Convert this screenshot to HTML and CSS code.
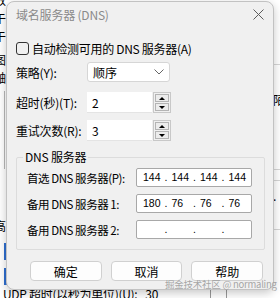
FILE: index.html
```html
<!DOCTYPE html>
<html lang="zh-CN">

<head>
    <meta charset="UTF-8">
    <meta name="viewport" content="width=device-width, initial-scale=1.0">
    <title>域名服务器 (DNS)</title>
    <link rel="stylesheet" href="styles.css">
</head>

<body>
    <div class="desk">
        <div class="desk-top">
            <div class="desk-left">
                <div class="bg-glyph g1">数</div>
                <div class="bg-glyph g2">午</div>
                <div class="bg-glyph g3">午</div>
                <div class="bg-glyph g4">图</div>
                <div class="bg-glyph g5">鼬</div>
                <div class="bg-rule"></div>
                <div class="bg-glyph g6">高</div>
                <div class="bg-blue"></div>
                <div class="bg-blue"></div>
            </div>
            <div class="desk-right">
                <div class="bg-hline h1"></div>
                <div class="bg-glyph r1">陌</div>
                <div class="bg-hline h2"></div>
                <div class="bg-hline h3"></div>
                <div class="bg-glyph r2">.</div>
                <div class="bg-hline h4"></div>
            </div>
        </div>
        <div class="desk-bottom">
            <span>UDP 超时(以秒为单位)(U):</span>
            <span class="bg-val">30</span>
            <span class="bg-box"></span>
        </div>
    </div>

    <div class="dialog">
        <div class="titlebar">
            <span class="title">域名服务器 (DNS)</span>
            <svg class="close" width="11" height="11" viewBox="0 0 11 11">
                <path d="M0.5 0.5 L10.5 10.5 M10.5 0.5 L0.5 10.5" stroke="#5c5c5c" stroke-width="1" fill="none" />
            </svg>
        </div>

        <label class="check">
            <span class="box"></span>
            <span>自动检测可用的 DNS 服务器(A)</span>
        </label>

        <div class="row row-policy">
            <span class="lbl">策略(Y):</span>
            <div class="select">
                <span>顺序</span>
                <svg width="10" height="6" viewBox="0 0 10 6">
                    <path d="M0.5 0.5 L5 5 L9.5 0.5" stroke="#666" stroke-width="1" fill="none" />
                </svg>
            </div>
        </div>

        <div class="row row-timeout">
            <span class="lbl">超时(秒)(T):</span>
            <div class="spin">
                <span class="field">2</span>
                <div class="arrows">
                    <span class="arrow up"></span>
                    <span class="arrow down"></span>
                </div>
            </div>
        </div>

        <div class="row row-retry">
            <span class="lbl">重试次数(R):</span>
            <div class="spin">
                <span class="field">3</span>
                <div class="arrows">
                    <span class="arrow up"></span>
                    <span class="arrow down"></span>
                </div>
            </div>
        </div>

        <fieldset class="group">
            <legend>DNS 服务器</legend>

            <div class="iprow">
                <span class="iplbl">首选 DNS 服务器(P):</span>
                <div class="ip">
                    <span class="seg">144</span>
                    <span class="seg"><i>.</i>144</span>
                    <span class="seg"><i>.</i>144</span>
                    <span class="seg"><i>.</i>144</span>
                </div>
            </div>

            <div class="iprow">
                <span class="iplbl">备用 DNS 服务器 1:</span>
                <div class="ip">
                    <span class="seg">180</span>
                    <span class="seg"><i>.</i>76</span>
                    <span class="seg"><i>.</i>76</span>
                    <span class="seg"><i>.</i>76</span>
                </div>
            </div>

            <div class="iprow">
                <span class="iplbl">备用 DNS 服务器 2:</span>
                <div class="ip">
                    <span class="seg"></span>
                    <span class="seg"><i>.</i></span>
                    <span class="seg"><i>.</i></span>
                    <span class="seg"><i>.</i></span>
                </div>
            </div>
        </fieldset>

        <div class="buttons">
            <button>确定</button>
            <button>取消</button>
            <button>帮助</button>
        </div>
    </div>

    <div class="watermark">掘金技术社区 @ normaling</div>
</body>

</html>
```

FILE: styles.css
```css
body {
    margin: 0;
    width: 280px;
    height: 298px;
    overflow: hidden;
    position: relative;
    background: #fff;
    font-family: "Noto Sans CJK SC", sans-serif;
    font-size: 12px;
    color: #000;
}

/* window behind the dialog */
.desk {
    display: flex;
    flex-direction: column;
    height: 298px;
}

.desk-top {
    display: flex;
    justify-content: space-between;
    height: 290px;
}

.desk-left {
    width: 8px;
    display: flex;
    flex-direction: column;
}

.desk-right {
    width: 7px;
    display: flex;
    flex-direction: column;
}

.bg-glyph {
    height: 18px;
    line-height: 18px;
    margin-left: -6px;
}

.g1 { margin-top: -9px; }
.g4 { margin-top: 6px; }
.g6 { margin-top: 48px; }

.bg-rule {
    width: 1px;
    height: 78px;
    margin: 4px 0 0 4px;
    background: #b8b8b8;
}

.bg-blue {
    width: 3px;
    height: 17px;
    margin: 8px 0 0 4px;
    background: #2f6fd0;
}

.r1 { margin-left: 0; margin-top: 26px; }
.r2 { margin-left: 0; margin-top: 6px; }

.bg-hline {
    height: 1px;
    background: #d6d6d6;
}

.h1 { margin-top: 64px; }
.h2 { margin-top: 60px; }
.h3 { margin-top: 10px; }
.h4 { margin-top: 24px; }

.desk-bottom {
    display: flex;
    align-items: center;
    height: 16px;
    padding-left: 3px;
    letter-spacing: -0.3px;
}

.bg-val {
    margin-left: 8px;
}

.bg-box {
    width: 15px;
    height: 14px;
    margin-left: 52px;
    border: 1px solid #999;
}

/* the dialog */
.dialog {
    position: absolute;
    left: 6px;
    top: 1px;
    width: 268px;
    height: 289px;
    box-sizing: border-box;
    padding: 0 8px 0 9px;
    background: #f0f0f0;
    border: 1px solid #c2c2c2;
    border-radius: 8px;
    box-shadow: 0 3px 10px rgba(0, 0, 0, 0.22);
}

.titlebar {
    display: flex;
    justify-content: space-between;
    align-items: center;
    height: 25px;
}

.title {
    color: #8a8a8a;
    letter-spacing: -0.2px;
}

.close {
    margin-right: 1px;
}

.check {
    display: flex;
    align-items: center;
    gap: 3px;
    height: 14px;
    margin-top: 14px;
    letter-spacing: -0.3px;
}

.box {
    width: 11px;
    height: 11px;
    border: 1px solid #333;
    border-radius: 3px;
}

.row {
    display: flex;
    align-items: center;
}

.lbl {
    width: 71px;
    flex-shrink: 0;
    white-space: nowrap;
    letter-spacing: -0.2px;
}

.row-policy {
    height: 20px;
    margin-top: 7px;
}

.row-timeout {
    height: 21px;
    margin-top: 10px;
}

.row-retry {
    height: 21px;
    margin-top: 7px;
}

.select {
    width: 83px;
    height: 20px;
    box-sizing: border-box;
    display: flex;
    justify-content: space-between;
    align-items: center;
    padding: 0 5px 0 5px;
    background: #fff;
    border: 1px solid #d6d6d6;
    border-radius: 3px;
}

.spin {
    display: flex;
    height: 21px;
}

.field {
    width: 65px;
    box-sizing: border-box;
    padding-left: 5px;
    line-height: 21px;
    background: #fff;
    border-bottom: 1px solid #e4e4e4;
}

.arrows {
    width: 18px;
    box-sizing: border-box;
    margin-left: 1px;
    padding: 1px;
    display: flex;
    flex-direction: column;
    gap: 1px;
    border: 1px solid #c8c8c8;
}

.arrow {
    flex: 1;
    display: flex;
    justify-content: center;
    align-items: center;
    background: #ececec;
    border: 1px solid #b4b4b4;
}

.arrow::after {
    content: "";
    border-left: 3px solid transparent;
    border-right: 3px solid transparent;
}

.up::after {
    border-bottom: 3px solid #000;
}

.down::after {
    border-top: 3px solid #000;
}

.group {
    margin: 9px 0 0 0;
    padding: 0 12px 10px 10px;
    border: 1px solid #dcdcdc;
    border-radius: 2px;
}

.group legend {
    margin-left: -4px;
    padding: 0 2px;
    line-height: 14px;
    letter-spacing: -0.2px;
}

.iprow {
    display: flex;
    align-items: center;
    height: 19px;
    margin-top: 7px;
}

.iprow:first-of-type {
    margin-top: 4px;
}

.iplbl {
    width: 109px;
    flex-shrink: 0;
    white-space: nowrap;
    font-size: 11.5px;
    letter-spacing: -0.45px;
}

.ip {
    width: 116px;
    height: 19px;
    flex-shrink: 0;
    box-sizing: border-box;
    display: flex;
    background: #fff;
    border: 1px solid #a8a8a8;
    border-radius: 2px;
    font-family: "Liberation Sans", sans-serif;
    font-size: 10.5px;
    line-height: 17px;
}

.seg {
    flex: 1;
    padding-left: 6px;
    white-space: nowrap;
}

.seg i {
    font-style: normal;
    display: inline-block;
    width: 7px;
    margin-left: -7px;
}

.buttons {
    display: flex;
    gap: 9px;
    margin-top: 11px;
    padding: 0 2px 0 14px;
}

.buttons button {
    flex: 1;
    height: 20px;
    padding: 0;
    font-family: inherit;
    font-size: 12px;
    color: #000;
    background: #fdfdfd;
    border: 1px solid #d0d0d0;
    border-radius: 4px;
}

.watermark {
    position: absolute;
    left: 165px;
    top: 277px;
    font-size: 9.5px;
    letter-spacing: -0.25px;
    color: rgba(150, 150, 150, 0.85);
    white-space: nowrap;
}
```
